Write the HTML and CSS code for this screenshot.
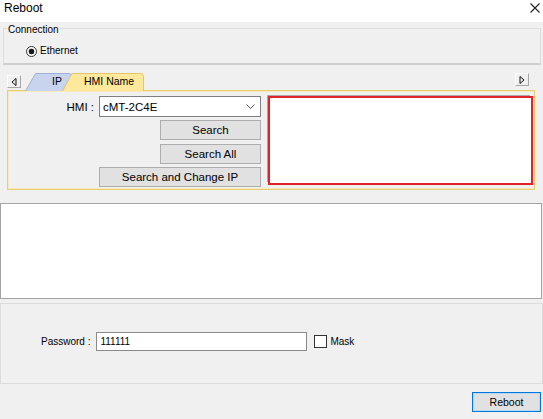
FILE: index.html
```html
<!DOCTYPE html>
<html lang="en">
<head>
    <meta charset="UTF-8">
    <meta name="viewport" content="width=device-width, initial-scale=1.0">
    <title>Reboot</title>
    <link rel="stylesheet" href="styles.css">
</head>
<body>
    <div class="window">
        <!-- title bar -->
        <div class="titlebar">
            <span class="title">Reboot</span>
            <svg class="close" width="10" height="10" viewBox="0 0 10 10">
                <path d="M0.5 0.5 L9.5 9.5 M9.5 0.5 L0.5 9.5" stroke="#222" stroke-width="1.1" fill="none" />
            </svg>
        </div>

        <!-- connection type -->
        <fieldset class="group conn">
            <legend>Connection</legend>
            <label class="radio"><span class="radio-mark"></span>Ethernet</label>
        </fieldset>

        <!-- tab strip -->
        <div class="tabs">
            <div class="scroll-btn scroll-left">
                <svg width="6" height="8" viewBox="0 0 6 8"><path d="M5 0.5 L5 7.5 L1 4 Z" fill="none" stroke="#111" stroke-width="1" /></svg>
            </div>
            <div class="tab tab-ip">
                <svg class="tab-shape" width="48" height="18" viewBox="0 0 48 18">
                    <path d="M0.5 18 L10.5 0.5 H43 Q47.5 0.5 47.5 5 V18" fill="#c8d4ee" stroke="#9eb1d9" />
                </svg>
                <span class="tab-label">IP</span>
            </div>
            <div class="tab tab-hmi">
                <svg class="tab-shape" width="82" height="18" viewBox="0 0 82 18">
                    <path d="M0.5 18 L10 0.5 H78.5 Q81.5 0.5 81.5 3.5 V18" fill="#fde89c" stroke="#e3c466" />
                </svg>
                <span class="tab-label">HMI Name</span>
            </div>
            <div class="scroll-btn scroll-right">
                <svg width="6" height="8" viewBox="0 0 6 8"><path d="M1 0.5 L1 7.5 L5 4 Z" fill="none" stroke="#111" stroke-width="1" /></svg>
            </div>
        </div>

        <div class="tab-panel">
            <div class="hmi-controls">
                <div class="hmi-row">
                    <span class="hmi-label">HMI :</span>
                    <div class="combo">
                        <span>cMT-2C4E</span>
                        <svg width="9" height="5" viewBox="0 0 9 5"><path d="M0.5 0.5 L4.5 4.5 L8.5 0.5" fill="none" stroke="#555" stroke-width="1" /></svg>
                    </div>
                </div>
                <button class="btn btn-short btn-search">Search</button>
                <button class="btn btn-short btn-all">Search All</button>
                <button class="btn btn-wide">Search and Change IP</button>
            </div>
            <div class="hmi-list"></div>
        </div>

        <!-- output log -->
        <div class="log"></div>

        <fieldset class="group pass">
            <div class="pass-row">
                <span>Password :</span>
                <div class="field">111111</div>
                <label class="check"><span class="check-box"></span>Mask</label>
            </div>
        </fieldset>

        <div class="footer">
            <button class="btn btn-reboot">Reboot</button>
        </div>
    </div>
</body>
</html>
```

FILE: styles.css
```css
body {
    margin: 0;
    background-color: #f0f0f0;
    font-family: "Liberation Sans", Arial, sans-serif;
    font-size: 10px;
    color: #000;
}

.window {
    width: 543px;
    height: 419px;
    overflow: hidden;
}

.titlebar {
    height: 22px;
    background-color: #fff;
    display: flex;
    justify-content: space-between;
    align-items: flex-start;
    padding: 1px 3px 0 4px;
    box-sizing: border-box;
}

.title {
    font-size: 12px;
    line-height: 14px;
}

.close {
    margin-top: 2px;
}

/* group boxes */
.group {
    margin: 0;
    padding: 0;
    border: 1px solid #dcdcdc;
    min-width: 0;
}

.conn {
    margin: 0 2px 0 3px;
    padding: 11px 0 6px 0;
    border-bottom: 2px solid #cdcdcd;
}

.conn legend {
    padding: 0 1px;
    margin-left: 3px;
    line-height: 12px;
    position: relative;
    top: 2px;
}

.radio,
.check {
    display: flex;
    align-items: center;
    line-height: 12px;
}

.radio {
    margin-left: 22px;
}

.radio-mark {
    width: 9px;
    height: 9px;
    border: 1px solid #333;
    border-radius: 50%;
    background: radial-gradient(circle, #1b1b1b 0 2.6px, #fff 3.2px);
    margin-right: 3px;
}

/* tabs */
.tabs {
    display: flex;
    align-items: flex-start;
    margin-top: 8px;
    height: 17px;
    padding-left: 7px;
}

.scroll-btn {
    width: 12px;
    height: 11px;
    border: 1px solid;
    border-color: #fff #a6a6a6 #a6a6a6 #fff;
    background-color: #f0f0f0;
    display: flex;
    align-items: center;
    justify-content: center;
}

.scroll-left {
    margin-top: 2px;
    margin-right: 4px;
}

.scroll-right {
    margin-left: auto;
    margin-right: 14px;
}

.tab {
    position: relative;
    height: 18px;
    font-size: 10.5px;
    line-height: 17px;
    z-index: 1;
}

.tab-shape {
    position: absolute;
    left: 0;
    top: 0;
}

.tab-label {
    position: relative;
}

.tab-ip {
    width: 48px;
    padding-left: 27px;
    box-sizing: border-box;
}

.tab-hmi {
    width: 82px;
    margin-left: -11px;
    padding-left: 22px;
    box-sizing: border-box;
    z-index: 2;
}

.tab-panel {
    margin: 0 8px 0 7px;
    border: 1px solid #e8cc78;
    box-shadow: inset 0 0 0 1px #f8ebbb;
    padding: 5px 1px 2px 0;
    display: flex;
    align-items: flex-start;
}

.hmi-controls {
    width: 253px;
    display: flex;
    flex-direction: column;
    align-items: flex-end;
    font-size: 11.5px;
}

.hmi-row {
    display: flex;
    align-items: center;
    gap: 5px;
}

.combo {
    width: 162px;
    height: 21px;
    box-sizing: border-box;
    border: 1px solid #7f7f7f;
    background-color: #fff;
    display: flex;
    align-items: center;
    justify-content: space-between;
    padding: 0 5px 0 3px;
}

.btn {
    height: 20px;
    background-color: #e1e1e1;
    border: 1px solid #adadad;
    font-family: inherit;
    font-size: 11.5px;
    color: #000;
    padding: 0;
}

.btn-short {
    width: 101px;
}

.btn-search {
    margin-top: 3px;
}

.btn-all {
    margin-top: 4px;
}

.btn-wide {
    width: 162px;
    margin-top: 3px;
}

.hmi-list {
    flex: 1;
    margin-left: 7px;
    height: 89px;
    box-sizing: border-box;
    background-color: #fff;
    border: 2px solid #e2222b;
    box-shadow: -2px -2px 0 -1px #a8a8a8;
}

.log {
    margin-top: 13px;
    margin-right: 1px;
    height: 96px;
    box-sizing: border-box;
    background-color: #fff;
    border: 1px solid #a3a3a3;
}

.pass {
    margin-top: 4px;
    padding: 28px 0 32px 40px;
}

.pass-row {
    display: flex;
    align-items: center;
    height: 19px;
}

.field {
    width: 211px;
    height: 19px;
    box-sizing: border-box;
    margin-left: 6px;
    border: 1px solid #8a8a8a;
    background-color: #fff;
    padding-left: 3px;
    line-height: 17px;
}

.check {
    margin-left: 7px;
}

.check-box {
    width: 11px;
    height: 11px;
    border: 1px solid #333;
    background-color: #fff;
    margin-right: 3px;
}

.footer {
    display: flex;
    justify-content: flex-end;
    margin-top: 8px;
    padding-right: 2px;
}

.btn-reboot {
    width: 69px;
    font-size: 10.5px;
    border: 1px solid #0078d7;
    box-shadow: inset 0 0 0 1px #b9d7f1;
}
```
